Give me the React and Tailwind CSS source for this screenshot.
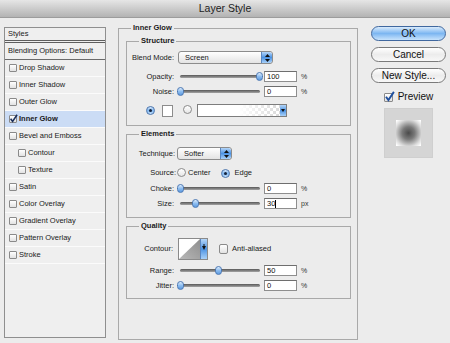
import React from "react";

const F = "font-['Liberation_Sans',Arial,sans-serif]";

function Check({ checked, big }) {
  return (
    <span
      className={
        "relative inline-block shrink-0 rounded-[1px] border border-[#8a8a8a] bg-linear-to-b from-white to-[#e2e2e2] " +
        (big ? "w-[9px] h-[9px]" : "w-[8px] h-[8px]")
      }
    >
      {checked && (
        <svg
          className={big ? "absolute left-[-1px] top-[-3px] w-[11px] h-[11px]" : "absolute left-[-1px] top-[-2px] w-[9px] h-[9px]"}
          viewBox="0 0 10 10"
        >
          <path d="M1.8 5.2 L4 8.2 L9 0.8" stroke={big ? "#1f4f9e" : "#1b2f5c"} strokeWidth="1.7" fill="none" />
        </svg>
      )}
    </span>
  );
}

function Radio({ on }) {
  return on ? (
    <span className="relative flex items-center justify-center w-[9px] h-[9px] shrink-0 rounded-full border border-[#4a74ad] bg-linear-to-b from-[#d6e8fb] via-[#7db5ef] to-[#c4e0fb]">
      <span className="w-[3px] h-[3px] rounded-full bg-[#15223a]" />
    </span>
  ) : (
    <span className="inline-block w-[9px] h-[9px] shrink-0 rounded-full border border-[#8a8a8a] bg-linear-to-b from-white to-[#e6e6e6]" />
  );
}

function Slider({ p }) {
  return (
    <div className="relative w-[86px] h-[9px] shrink-0">
      <div className="absolute left-[3px] right-[3px] top-[3px] h-[3px] rounded-full bg-linear-to-b from-[#585858] to-[#a5a5a5]" />
      <div
        className="absolute top-0 w-[7px] h-[9px] rounded-full border border-[#4b78b4] bg-linear-to-b from-[#dcebfb] via-[#8dbdf0] to-[#5e9be0]"
        style={{ left: Math.round(p * 79) }}
      />
    </div>
  );
}

function Field({ v, unit, cursor }) {
  return (
    <>
      <div className="ml-[1px] flex items-center w-[33px] h-[11px] shrink-0 border border-[#8e8e8e] border-t-[#6e6e6e] bg-white pl-[2px] text-[7.5px] leading-none text-[#111]">
        {v}
        {cursor && <span className="inline-block w-px h-[8px] bg-black" />}
      </div>
      <span className="ml-[4px] text-[7px] text-[#333]">{unit}</span>
    </>
  );
}

function Stepper() {
  return (
    <div className="flex items-center justify-center w-[11px] h-full rounded-r-[2px] bg-linear-to-b from-[#b5d6f8] via-[#4c93e3] to-[#a9d1f8] border-l border-[#5a86c0]">
      <svg width="5" height="8" viewBox="0 0 5 8">
        <polygon points="2.5,0 5,3 0,3" fill="#111" />
        <polygon points="0,5 5,5 2.5,8" fill="#111" />
      </svg>
    </div>
  );
}

function Label({ w, children }) {
  return <div className={"text-right shrink-0 " + w}>{children}</div>;
}

const items = [
  { t: "Drop Shadow" },
  { t: "Inner Shadow" },
  { t: "Outer Glow" },
  { t: "Inner Glow", sel: true },
  { t: "Bevel and Emboss" },
  { t: "Contour", ind: true },
  { t: "Texture", ind: true },
  { t: "Satin" },
  { t: "Color Overlay" },
  { t: "Gradient Overlay" },
  { t: "Pattern Overlay" },
  { t: "Stroke" },
];

export default function App() {
  return (
    <div className={"w-[450px] h-[343px] overflow-hidden bg-[#ececec] text-[7.5px] leading-none text-[#1a1a1a] " + F}>
      {/* Title bar */}
      <div className="h-[18px] flex items-center justify-center bg-linear-to-b from-[#e6e6e6] to-[#b3b3b3] border-b border-[#9c9c9c] text-[10.5px] text-[#222]">
        Layer Style
      </div>

      <div className="flex items-start pl-[4px]">
        {/* Left list */}
        <div className="mt-[9px] w-[102px] h-[311px] shrink-0 border border-[#8f8f8f] bg-[#efefef]">
          <div className="h-[15px] flex items-center pl-[3px] border-b-[3px] border-double border-[#5e5e5e]">Styles</div>
          <div className="h-[17px] flex items-center pl-[3px] border-b border-[#6a6a6a]">Blending Options: Default</div>
          {items.map((it) => (
            <div
              key={it.t}
              className={
                "h-[17px] flex items-center border-b border-[#fbfbfb] " +
                (it.ind ? "pl-[13px] " : "pl-[4px] ") +
                (it.sel ? "bg-[#cbdcf5] font-bold" : "")
              }
            >
              <Check checked={it.sel} />
              <span className="ml-[2px]">{it.t}</span>
            </div>
          ))}
        </div>

        {/* Middle */}
        <fieldset className="ml-[12px] mt-[5px] w-[240px] h-[317px] shrink-0 border border-[#a9a9a9] pl-[7px] pr-[6px] pt-[3px]">
          <legend className="ml-[5px] px-[2px] leading-[10px] font-bold">Inner Glow</legend>

          {/* Structure */}
          <fieldset className="w-[225px] border border-[#a9a9a9] pb-[8px]">
            <legend className="ml-[12px] px-[2px] leading-[10px] font-bold">Structure</legend>
            <div className="mt-[5px] h-[13px] flex items-center">
              <Label w="w-[47px]">Blend Mode:</Label>
              <div className="ml-[4px] w-[95px] h-[13px] flex items-center rounded-[3px] border border-[#8c8c8c] bg-linear-to-b from-white to-[#e3e3e3] overflow-hidden">
                <span className="flex-1 pl-[6px]">Screen</span>
                <Stepper />
              </div>
            </div>
            <div className="mt-[7px] h-[11px] flex items-center">
              <Label w="w-[47px]">Opacity:</Label>
              <div className="ml-[3px]"><Slider p={1} /></div>
              <Field v="100" unit="%" />
            </div>
            <div className="mt-[4px] h-[11px] flex items-center">
              <Label w="w-[47px]">Noise:</Label>
              <div className="ml-[3px]"><Slider p={0} /></div>
              <Field v="0" unit="%" />
            </div>
            <div className="mt-[7px] h-[13px] flex items-center pl-[19px]">
              <Radio on />
              <span className="ml-[7px] w-[11px] h-[12px] border border-[#8c8c8c] bg-white" />
              <span className="ml-[10px]"><Radio /></span>
              <div className="ml-[5px] w-[90px] h-[13px] flex border border-[#7d7d7d] bg-[repeating-conic-gradient(#d9d9d9_0_25%,#ffffff_0_50%)] bg-[length:6px_6px]">
                <div className="flex-1 bg-linear-to-r from-white via-white to-transparent" />
                <div className="w-[6px] h-full flex items-center justify-center bg-linear-to-b from-[#b5d6f8] via-[#4c93e3] to-[#a9d1f8]">
                  <svg width="4" height="3" viewBox="0 0 4 3"><polygon points="0,0 4,0 2,3" fill="#111" /></svg>
                </div>
              </div>
            </div>
          </fieldset>

          {/* Elements */}
          <fieldset className="mt-[3px] w-[225px] border border-[#a9a9a9] pb-[8px]">
            <legend className="ml-[12px] px-[2px] leading-[10px] font-bold">Elements</legend>
            <div className="mt-[8px] h-[13px] flex items-center">
              <Label w="w-[48px]">Technique:</Label>
              <div className="ml-[2px] w-[55px] h-[13px] flex items-center rounded-[3px] border border-[#8c8c8c] bg-linear-to-b from-white to-[#e3e3e3] overflow-hidden">
                <span className="flex-1 pl-[6px]">Softer</span>
                <Stepper />
              </div>
            </div>
            <div className="mt-[8px] h-[10px] flex items-center">
              <Label w="w-[49px]">Source:</Label>
              <span className="ml-[1px]"><Radio /></span>
              <span className="ml-[2px]">Center</span>
              <span className="ml-[10px]"><Radio on /></span>
              <span className="ml-[5px]">Edge</span>
            </div>
            <div className="mt-[5px] h-[11px] flex items-center">
              <Label w="w-[47px]">Choke:</Label>
              <div className="ml-[3px]"><Slider p={0} /></div>
              <Field v="0" unit="%" />
            </div>
            <div className="mt-[4px] h-[11px] flex items-center">
              <Label w="w-[47px]">Size:</Label>
              <div className="ml-[3px]"><Slider p={0.19} /></div>
              <Field v="30" unit="px" cursor />
            </div>
          </fieldset>

          {/* Quality */}
          <fieldset className="mt-[3px] w-[225px] border border-[#a9a9a9] pb-[7px]">
            <legend className="ml-[12px] px-[2px] leading-[10px] font-bold">Quality</legend>
            <div className="mt-[7px] h-[22px] flex items-center">
              <Label w="w-[46px]">Contour:</Label>
              <div className="ml-[5px] w-[30px] h-[22px] flex border border-[#8a8a8a] bg-white overflow-hidden">
                <svg className="flex-1 h-full" viewBox="0 0 22 20" preserveAspectRatio="none">
                  <defs>
                    <linearGradient id="cg" x1="0" y1="1" x2="1" y2="0">
                      <stop offset="0" stopColor="#b8b8b8" />
                      <stop offset="1" stopColor="#8e8e8e" />
                    </linearGradient>
                  </defs>
                  <polygon points="0,20 22,0 22,20" fill="url(#cg)" />
                </svg>
                <div className="w-[7px] h-full flex flex-col items-center pt-[5px] bg-linear-to-b from-[#b5d6f8] via-[#4c93e3] to-[#a9d1f8] border-l border-[#5a86c0]">
                  <svg width="4" height="6" viewBox="0 0 4 6">
                    <rect x="1.5" y="0" width="1" height="2" fill="#111" />
                    <polygon points="0,2 4,2 2,6" fill="#111" />
                  </svg>
                </div>
              </div>
              <span className="ml-[11px] w-[9px] h-[10px] rounded-[2px] border border-[#8a8a8a] bg-linear-to-b from-white to-[#e2e2e2]" />
              <span className="ml-[4px]">Anti-aliased</span>
            </div>
            <div className="mt-[5px] h-[11px] flex items-center">
              <Label w="w-[47px]">Range:</Label>
              <div className="ml-[3px]"><Slider p={0.475} /></div>
              <Field v="50" unit="%" />
            </div>
            <div className="mt-[4px] h-[11px] flex items-center">
              <Label w="w-[47px]">Jitter:</Label>
              <div className="ml-[3px]"><Slider p={0} /></div>
              <Field v="0" unit="%" />
            </div>
          </fieldset>
        </fieldset>

        {/* Right column */}
        <div className="ml-[13px] mt-[8px] w-[75px] flex flex-col items-center text-[10px] text-[#111]">
          <div className="w-full h-[15px] flex items-center justify-center rounded-full border border-[#40689f] bg-linear-to-b from-[#d9ebfc] via-[#7cb6f1] to-[#c8e3fc]">
            OK
          </div>
          <div className="mt-[6px] w-full h-[15px] flex items-center justify-center rounded-full border border-[#7a7a7a] bg-linear-to-b from-white via-[#ececec] to-[#f8f8f8]">
            Cancel
          </div>
          <div className="mt-[6px] w-full h-[15px] flex items-center justify-center rounded-full border border-[#7a7a7a] bg-linear-to-b from-white via-[#ececec] to-[#f8f8f8]">
            New Style...
          </div>
          <div className="mt-[9px] h-[10px] flex items-center">
            <Check checked big />
            <span className="ml-[5px]">Preview</span>
          </div>
          <div className="mt-[6px] w-[49px] h-[50px] flex items-center justify-center bg-[#d5d5d5] border border-[#cfcfcf]">
            <div className="w-[25px] h-[26px] bg-[radial-gradient(circle,#4a4a4a_0%,#7a7a7a_35%,#dcdcdc_75%,#ffffff_95%)]" />
          </div>
        </div>
      </div>
    </div>
  );
}
